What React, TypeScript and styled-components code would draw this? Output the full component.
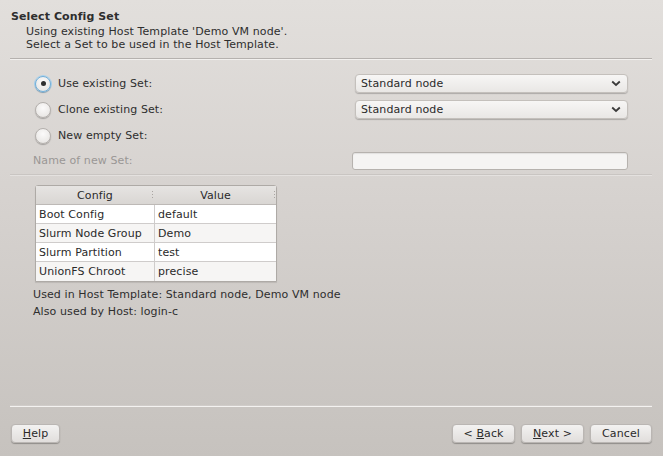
import styled, { createGlobalStyle } from 'styled-components'

const GlobalStyle = createGlobalStyle`
  html, body { margin: 0; padding: 0; }
  body {
    width: 663px;
    height: 456px;
    overflow: hidden;
    font-family: 'DejaVu Sans', 'Liberation Sans', sans-serif;
    font-size: 11px;
    letter-spacing: 0.1px;
    color: #2e2e2e;
  }
`

const Window = styled.div`
  width: 663px;
  height: 456px;
  box-sizing: border-box;
  background: linear-gradient(to bottom, #e2dfdc 0px, #d6d2cf 200px, #c6c2be 456px);
  display: flex;
  flex-direction: column;
  padding: 0 11px 0 10px;
`

const Header = styled.div`
  padding: 10px 0 7px 1px;
  border-bottom: 1px solid #b5b1ae;
  box-shadow: 0 1px 0 #f2f0ee;
`

const Title = styled.div`
  font-weight: bold;
  line-height: 14px;
  margin-bottom: 1px;
`

const Subtitle = styled.div`
  padding-left: 15px;
  line-height: 13px;
`

const Body = styled.div`
  flex: 1;
  display: flex;
  flex-direction: column;
  padding: 15px 0 0 0;
`

const FormGrid = styled.div`
  display: grid;
  grid-template-columns: 322px 1fr;
  row-gap: 7px;
  padding: 0 24px 0 23px;
  align-items: center;
`

const RadioRow = styled.label`
  display: flex;
  align-items: center;
  gap: 7px;
  height: 19px;
  padding-left: 2px;
`

const Radio = styled.span<{ checked?: boolean }>`
  width: 16px;
  height: 16px;
  border-radius: 50%;
  box-sizing: border-box;
  border: 1px solid ${p => (p.checked ? '#6fb0dc' : '#b4b0ad')};
  background: radial-gradient(circle at 50% 35%, #fbfafa 0%, #ebe9e7 70%, #dedbd8 100%);
  box-shadow: 0 1px 1px rgba(0, 0, 0, 0.25) ${p => (p.checked ? ', 0 0 0 1px #a8d2ee' : '')};
  display: flex;
  align-items: center;
  justify-content: center;
  &::after {
    content: '';
    width: 5px;
    height: 5px;
    border-radius: 50%;
    background: #2f2f2f;
    display: ${p => (p.checked ? 'block' : 'none')};
  }
`

const Combo = styled.div`
  height: 19px;
  box-sizing: border-box;
  border-radius: 4px;
  border: 1px solid #c4c0bc;
  background: linear-gradient(to bottom, #f7f6f5, #e9e7e5);
  box-shadow: 0 1px 1px rgba(0, 0, 0, 0.22);
  display: flex;
  align-items: center;
  justify-content: space-between;
  padding: 0 6px 0 5px;
  color: #2a2a2a;
`

const Chevron = () => (
  <svg width="10" height="7" viewBox="0 0 10 7">
    <path d="M1.2 1.5 L5 5 L8.8 1.5" fill="none" stroke="#3a3a3a" strokeWidth="1.8" />
  </svg>
)

const DimLabel = styled.div`
  color: #9a9795;
  height: 19px;
  display: flex;
  align-items: center;
  margin-top: 6px;
`

const TextInput = styled.div`
  height: 18px;
  box-sizing: border-box;
  margin: 6px 0 0 -3px;
  border: 1px solid #b6b2ae;
  border-radius: 3px;
  background: #f5f4f3;
  box-shadow: inset 0 1px 1px rgba(0, 0, 0, 0.08);
`

const Divider = styled.div`
  height: 1px;
  margin: 4px 0 0 0;
  background: #c9c5c2;
  box-shadow: 0 1px 0 #e4e1df;
`

const Table = styled.div`
  margin: 10px 0 0 25px;
  width: 240px;
  border: 1px solid #aeaaa6;
  border-radius: 3px 3px 0 0;
  background: #fff;
  box-shadow: 0 1px 1px rgba(0, 0, 0, 0.1);
`

const Row = styled.div<{ alt?: boolean; head?: boolean }>`
  display: grid;
  grid-template-columns: 119px 1fr;
  height: 19px;
  box-sizing: border-box;
  background: ${p => (p.head ? 'linear-gradient(to bottom, #e6e4e2, #d9d6d3)' : p.alt ? '#f6f5f4' : '#ffffff')};
  border-bottom: ${p => (p.head ? '1px solid #bdb9b6' : '1px solid #cfcccb')};
  &:last-child { border-bottom: none; }
`

const Cell = styled.div<{ head?: boolean }>`
  display: flex;
  align-items: center;
  justify-content: ${p => (p.head ? 'center' : 'flex-start')};
  padding: 0 3px;
  position: relative;
  color: #2a2a2a;
  &:first-child { border-right: 1px solid ${p => (p.head ? 'transparent' : '#cfcccb')}; }
`

const Grip = styled.span`
  position: absolute;
  right: 1px;
  top: 5px;
  width: 1px;
  height: 9px;
  background: repeating-linear-gradient(to bottom, #a9a5a2 0 1px, transparent 1px 3px);
`

const Info = styled.div`
  margin: 4px 0 0 23px;
  line-height: 17px;
`

const Footer = styled.div`
  border-top: 1px solid #f4f2f0;
  box-shadow: 0 -1px 0 #d0ccc9;
  display: flex;
  align-items: center;
  justify-content: space-between;
  padding: 17px 0 13px 1px;
`

const ButtonGroup = styled.div`
  display: flex;
  gap: 6px;
`

const Button = styled.button<{ w: number }>`
  width: ${p => p.w}px;
  height: 19px;
  box-sizing: border-box;
  font-family: inherit;
  font-size: 11px;
  letter-spacing: 0.1px;
  color: #2a2a2a;
  border: 1px solid #bab6b3;
  border-radius: 4px;
  background: linear-gradient(to bottom, #f3f2f1, #e1dedc);
  box-shadow: 0 1px 1px rgba(0, 0, 0, 0.28);
  padding: 0;
  u { text-decoration: underline; }
`

const rows = [
  ['Boot Config', 'default'],
  ['Slurm Node Group', 'Demo'],
  ['Slurm Partition', 'test'],
  ['UnionFS Chroot', 'precise']
]

export default function App () {
  return (
    <>
      <GlobalStyle />
      <Window>
        <Header>
          <Title>Select Config Set</Title>
          <Subtitle>Using existing Host Template 'Demo VM node'.</Subtitle>
          <Subtitle>Select a Set to be used in the Host Template.</Subtitle>
        </Header>
        <Body>
          <FormGrid>
            <RadioRow><Radio checked />Use existing Set:</RadioRow>
            <Combo>Standard node<Chevron /></Combo>
            <RadioRow><Radio />Clone existing Set:</RadioRow>
            <Combo>Standard node<Chevron /></Combo>
            <RadioRow><Radio />New empty Set:</RadioRow>
            <div />
          </FormGrid>
          <FormGrid>
            <DimLabel>Name of new Set:</DimLabel>
            <TextInput />
          </FormGrid>
          <Divider />
          <Table>
            <Row head>
              <Cell head>Config<Grip /></Cell>
              <Cell head>Value<Grip /></Cell>
            </Row>
            {rows.map(([k, v], i) => (
              <Row key={k} alt={i % 2 === 1}>
                <Cell>{k}</Cell>
                <Cell>{v}</Cell>
              </Row>
            ))}
          </Table>
          <Info>
            <div>Used in Host Template: Standard node, Demo VM node</div>
            <div>Also used by Host: login-c</div>
          </Info>
        </Body>
        <Footer>
          <Button w={49}><u>H</u>elp</Button>
          <ButtonGroup>
            <Button w={63}>&lt; <u>B</u>ack</Button>
            <Button w={63}><u>N</u>ext &gt;</Button>
            <Button w={62}>Cancel</Button>
          </ButtonGroup>
        </Footer>
      </Window>
    </>
  )
}
